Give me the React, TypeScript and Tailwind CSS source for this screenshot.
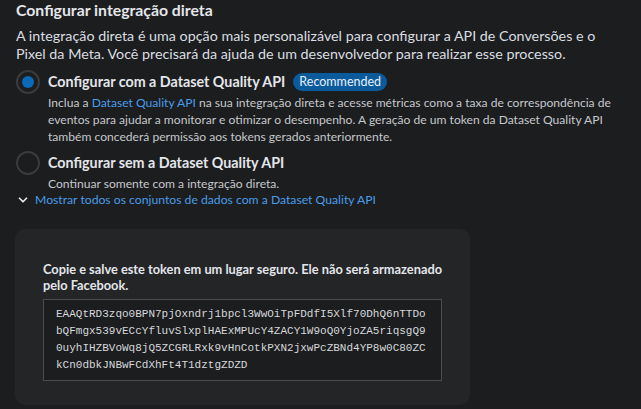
import { ChevronDown } from "lucide-react";

const token = [
  "EAAQtRD3zqo0BPN7pjOxndrj1bpcl3WwOiTpFDdfI5Xlf70DhQ6nTTDo",
  "bQFmgx539vECcYfluvSlxplHAExMPUcY4ZACY1W9oQ0YjoZA5riqsgQ9",
  "0uyhIHZBVoWq8jQ5ZCGRLRxk9vHnCotkPXN2jxwPcZBNd4YP8w0C80ZC",
  "kCn0dbkJNBwFCdXhFt4T1dztgZDZD",
];

function Radio({ checked }: { checked?: boolean }) {
  return (
    <div className="w-6 h-6 shrink-0 rounded-full border-2 border-[#3a3b3d] flex items-center justify-center">
      {checked && <div className="w-3 h-3 rounded-full bg-[#0a6ab8]" />}
    </div>
  );
}

export default function App() {
  return (
    <div className="w-[641px] h-[409px] overflow-hidden bg-[#1c1d1f] text-[#e4e6eb] font-['Lato',sans-serif]">
      <div className="pl-4 pr-3">
        <h1 className="text-[15.8px] font-bold leading-5">Configurar integração direta</h1>
        <p className="mt-[7px] whitespace-nowrap text-[14.3px] leading-[18px] text-[#dadde1]">
          A integração direta é uma opção mais personalizável para configurar a API de Conversões e o
          <br />
          Pixel da Meta. Você precisará da ajuda de um desenvolvedor para realizar esse processo.
        </p>

        <div className="mt-[7px] flex gap-2">
          <Radio checked />
          <div>
            <div className="flex items-center gap-2 h-6">
              <span className="text-[14.3px] font-bold">Configurar com a Dataset Quality API</span>
              <span className="rounded-full bg-[#0b5a9c] px-[6px] text-[12.5px] leading-[18px] text-[#e8f0fa]">
                Recommended
              </span>
            </div>
            <p className="whitespace-nowrap text-[12.1px] leading-[17px] text-[#c6c8cc]">
              Inclua a <span className="text-[#4a9ce8]">Dataset Quality API</span> na sua integração direta e acesse
              métricas como a taxa de correspondência de
              <br />
              eventos para ajudar a monitorar e otimizar o desempenho. A geração de um token da Dataset Quality API
              <br />
              também concederá permissão aos tokens gerados anteriormente.
            </p>
          </div>
        </div>

        <div className="mt-[6px] flex gap-2">
          <Radio />
          <div>
            <div className="flex items-center h-6">
              <span className="text-[14.3px] font-bold">Configurar sem a Dataset Quality API</span>
            </div>
            <p className="text-[12.1px] leading-[17px] text-[#c6c8cc]">Continuar somente com a integração direta.</p>
          </div>
        </div>

        <div className="-mt-[1px] flex items-center gap-[5px] text-[12.2px] leading-[17px] text-[#4a9ce8]">
          <ChevronDown className="w-[14px] h-[14px] text-[#e4e6eb]" strokeWidth={3} />
          <span>Mostrar todos os conjuntos de dados com a Dataset Quality API</span>
        </div>
      </div>

      <div className="ml-[15px] mt-[21px] w-[455px] h-[176px] rounded-[10px] bg-[#232527] pt-[32px] px-7">
        <p className="whitespace-nowrap text-[12.8px] font-bold leading-[16px] text-[#e4e6eb]">
          Copie e salve este token em um lugar seguro. Ele não será armazenado
          <br />
          pelo Facebook.
        </p>
        <div className="mt-[6px] border border-[#4a4c4e] bg-[#1c1d1f] px-[12px] py-[6px] font-['Liberation_Mono',monospace] text-[11px] leading-[17px] text-[#d6d8db]">
          {token.map((l) => (
            <div key={l}>{l}</div>
          ))}
        </div>
      </div>
    </div>
  );
}
